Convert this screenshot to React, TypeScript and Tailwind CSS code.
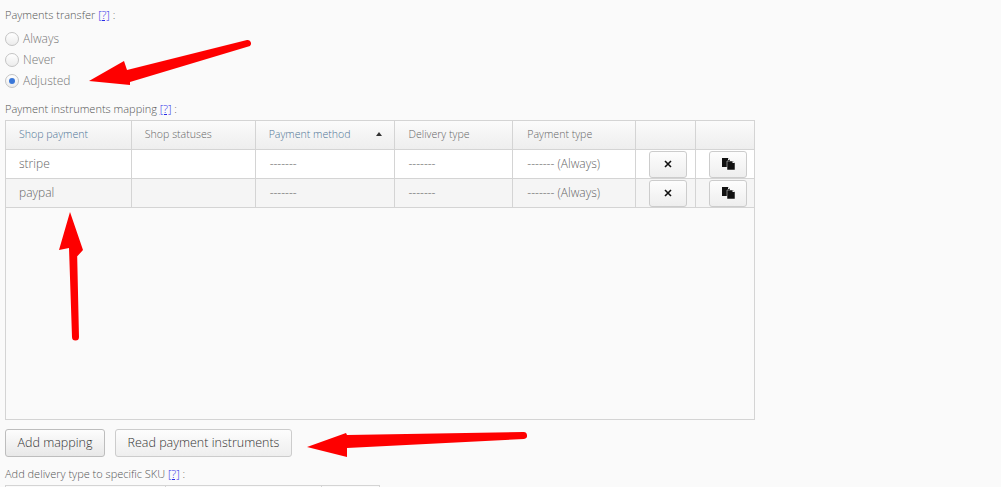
const font = { fontFamily: '"Open Sans", sans-serif' };

const Help = () => (
  <a className="text-[#2a2ae8] underline" href="#">
    [?]
  </a>
);

const Radio = ({ label, checked = false }: { label: string; checked?: boolean }) => (
  <div className="flex h-[21px] items-center gap-[4px] text-[12px] font-light text-[#777777]">
    <span className="flex h-[14px] w-[14px] items-center justify-center rounded-full border border-[#c4c4c4] bg-gradient-to-b from-[#ffffff] to-[#ececec]">
      {checked && <span className="h-[6px] w-[6px] rounded-full bg-[#3a77d8]" />}
    </span>
    {label}
  </div>
);

const columns = [
  "w-[126px]",
  "w-[124px]",
  "w-[140px]",
  "w-[118px]",
  "w-[123px]",
  "w-[60px]",
  "w-[58px]",
];

const RowButton = ({ children }: { children: React.ReactNode }) => (
  <button className="flex h-[27px] w-[38px] items-center justify-center rounded-[3px] border border-[#cccccc] bg-gradient-to-b from-[#fdfdfd] to-[#eeeeee]">
    {children}
  </button>
);

const CloseIcon = () => (
  <svg width="8" height="8" viewBox="0 0 8 8">
    <path d="M1 1 L7 7 M7 1 L1 7" stroke="#111" strokeWidth="1.6" />
  </svg>
);

const CopyIcon = () => (
  <svg width="13" height="13" viewBox="0 0 13 13">
    <path d="M0 0 H6 L8 2 V9 H0 Z" fill="#111" />
    <path d="M6 0 V2 H8" fill="#fafafa" />
    <path d="M5 3 H11 L13 5 V12 H5 Z" fill="#111" stroke="#fafafa" strokeWidth="0.5" />
    <path d="M10.5 3 V5 H13" fill="#fafafa" />
  </svg>
);

const Row = ({ name, striped = false }: { name: string; striped?: boolean }) => (
  <div
    className={`flex h-[29px] border-b border-[#d4d4d4] font-light text-[#666666] ${
      striped ? "bg-[#f5f5f5]" : "bg-white"
    }`}
  >
    <div className={`${columns[0]} flex items-center border-r border-[#d4d4d4] pl-[13px] text-[12px]`}>{name}</div>
    <div className={`${columns[1]} border-r border-[#d4d4d4]`} />
    <div className={`${columns[2]} flex items-center border-r border-[#d4d4d4] pl-[14px] text-[12px]`}>-------</div>
    <div className={`${columns[3]} flex items-center border-r border-[#d4d4d4] pl-[13px] text-[12px]`}>-------</div>
    <div className={`${columns[4]} flex items-center border-r border-[#d4d4d4] pl-[14px] text-[12px]`}>------- (Always)</div>
    <div className={`${columns[5]} flex items-center border-r border-[#d4d4d4] pl-[13px]`}>
      <RowButton>
        <CloseIcon />
      </RowButton>
    </div>
    <div className={`${columns[6]} flex items-center pl-[13px]`}>
      <RowButton>
        <CopyIcon />
      </RowButton>
    </div>
  </div>
);

const Header = () => {
  const titles = ["Shop payment", "Shop statuses", "Payment method", "Delivery type", "Payment type", "", ""];
  return (
    <div className="flex h-[29px] border-b border-[#d4d4d4] bg-gradient-to-b from-[#fbfbfb] to-[#eeeeee] text-[10.6px] font-light">
      {titles.map((title, i) => (
        <div
          key={i}
          className={`${columns[i]} flex items-center justify-between ${i === 4 ? "pl-[14px]" : "pl-[13px]"} ${
            i < 6 ? "border-r border-[#d4d4d4]" : ""
          } ${i === 0 || i === 2 ? "text-[#4f7596]" : "text-[#666666]"}`}
        >
          {title}
          {i === 2 && (
            <span className="mr-[12px] mb-[3px] h-0 w-0 border-x-[3px] border-b-[4px] border-x-transparent border-b-[#333333]" />
          )}
        </div>
      ))}
    </div>
  );
};

export default function App() {
  return (
    <div className="relative h-[487px] w-[1001px] overflow-hidden bg-[#fafafa] pl-[5px] text-[#555555]" style={font}>
      <p className="pt-[7px] text-[11px] font-light leading-[16px]">
        Payments transfer <Help /> :
      </p>
      <div className="mt-[5px]">
        <Radio label="Always" />
        <Radio label="Never" />
        <Radio label="Adjusted" checked />
      </div>
      <p className="mt-[10px] text-[11px] font-light leading-[16px]">
        Payment instruments mapping <Help /> :
      </p>
      <div className="mt-[3px] h-[300px] w-[750px] border border-[#d4d4d4]">
        <Header />
        <Row name="stripe" />
        <Row name="paypal" striped />
      </div>
      <div className="mt-[9px] flex gap-[10px] text-[12.5px] font-light text-[#333333]">
        <button className="h-[28px] w-[100px] rounded-[3px] border border-[#bdbdbd] bg-gradient-to-b from-[#fdfdfd] to-[#e8e8e8]">
          Add mapping
        </button>
        <button className="h-[28px] w-[177px] rounded-[3px] border border-[#cccccc] bg-gradient-to-b from-[#fdfdfd] to-[#eeeeee]">
          Read payment instruments
        </button>
      </div>
      <p className="mt-[9px] text-[11px] font-light leading-[16px]">
        Add delivery type to specific SKU <Help /> :
      </p>
      <div className="mt-[3px] flex h-[20px] w-[375px] border border-[#d4d4d4]">
        <div className="w-[160px] border-r border-[#d4d4d4]" />
        <div className="w-[156px] border-r border-[#d4d4d4]" />
      </div>

      {/* annotation arrows */}
      <svg className="pointer-events-none absolute left-0 top-0" width="1001" height="487" viewBox="0 0 1001 487">
        <g fill="#fe0000">
          <path d="M127 70 L247 40 A3.5 3.5 0 0 1 250 46 L130 82 L130 85 L89 81 L124 61 Z" />
          <path d="M72 262 L83 250 L70 212 L59 250 L69 248 L72 337 A3.5 3.5 0 0 0 79 337 L77 248 Z" />
          <path d="M347 435 L523 432 A3.5 3.5 0 0 1 524 439 L347 448 L347 457 L307 447 L346 433 Z" />
        </g>
      </svg>
    </div>
  );
}
